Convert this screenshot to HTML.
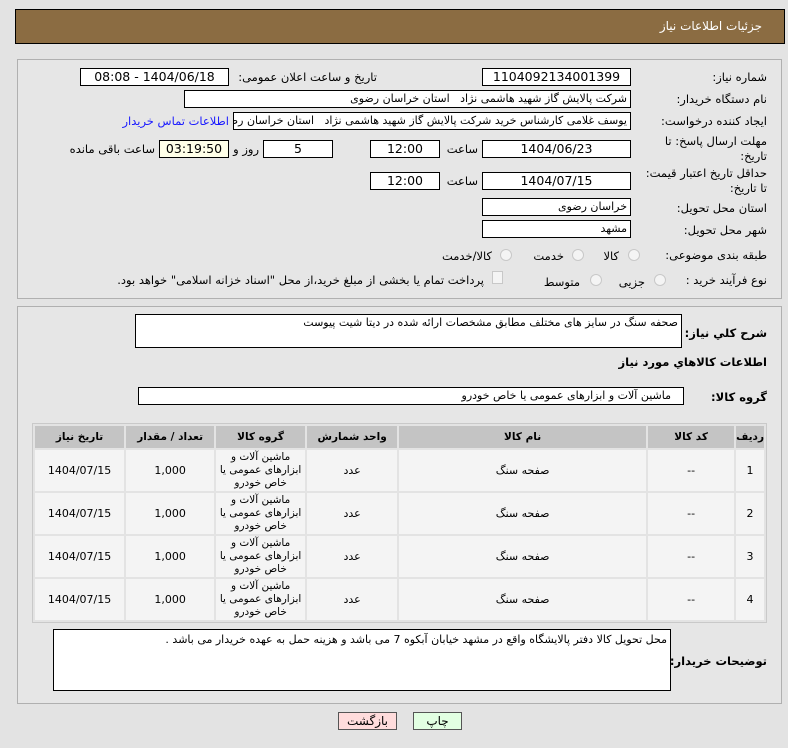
<!DOCTYPE html>
<html><head><meta charset="utf-8"><style>
*{box-sizing:border-box;margin:0;padding:0}
body{width:788px;height:748px;background:#e3e3e3;font-family:"DejaVu Sans","Liberation Sans",sans-serif;font-size:11px;color:#000;position:relative;overflow:hidden}
.a{position:absolute}
.hdr{left:15px;top:9px;width:770px;height:35px;background:#8b6c42;border:1px solid #000}
.hdr span{position:absolute;right:22px;top:9px;color:#fff;font-size:12px}
.pan{left:17px;width:765px;border:1px solid #b0b0b0;background:#e6e6e6}
.l{position:absolute;direction:rtl;white-space:nowrap;font-size:11.5px}
.in{position:absolute;background:#fff;border:1px solid #000;height:18px;direction:rtl;white-space:nowrap;overflow:hidden;padding:0 3px;font-size:11px;line-height:16px}
.c{text-align:center;font-size:12.5px}
.rad{position:absolute;width:12px;height:12px;border-radius:50%;border:1px solid #c8c8c8;background:#f4f4f4}
.b{font-weight:bold}
table{position:absolute;left:32px;top:423px;width:735px;border-collapse:separate;border-spacing:2px;background:#e3e3e3;border:1px solid #c9c9c9;direction:rtl}
th{background:#c4c4c4;height:22px;font-size:10.5px;font-weight:bold;padding:0}
td{background:#f4f4f4;height:41px;text-align:center;font-size:11px;line-height:13px;padding:0}
td.g{font-size:10.5px}
.btn{position:absolute;top:712px;height:18px;border:1px solid #555;font-size:12px;text-align:center;line-height:16px}
</style></head><body>
<div class="a hdr"><span>جزئیات اطلاعات نیاز</span></div>

<div class="a pan" style="top:59px;height:240px"></div>
<div class="l" style="right:21px;top:70px">شماره نیاز:</div>
<div class="in c" style="left:482px;top:68px;width:149px">1104092134001399</div>
<div class="l" style="right:411px;top:70px">تاریخ و ساعت اعلان عمومی:</div>
<div class="in c" style="left:80px;top:68px;width:149px">1404/06/18 - 08:08</div>

<div class="l" style="right:21px;top:92px">نام دستگاه خریدار:</div>
<div class="in" style="left:184px;top:90px;width:447px">شرکت پالایش گاز شهید هاشمی نژاد &nbsp; استان خراسان رضوی</div>

<div class="l" style="right:21px;top:114px">ایجاد کننده درخواست:</div>
<div class="in" style="left:233px;top:112px;width:398px">یوسف غلامی کارشناس خرید شرکت پالایش گاز شهید هاشمی نژاد &nbsp; استان خراسان رضوی</div>
<div class="l" style="right:559px;top:114px;color:#1a1aff">اطلاعات تماس خریدار</div>

<div class="l" style="right:21px;top:134px;line-height:15px">مهلت ارسال پاسخ: تا<br>تاریخ:</div>
<div class="in c" style="left:482px;top:140px;width:149px">1404/06/23</div>
<div class="l" style="right:310px;top:142px">ساعت</div>
<div class="in c" style="left:370px;top:140px;width:70px">12:00</div>
<div class="in c" style="left:263px;top:140px;width:70px">5</div>
<div class="l" style="right:529px;top:142px">روز و</div>
<div class="in c" style="left:159px;top:140px;width:70px;background:#ffffe8">03:19:50</div>
<div class="l" style="right:633px;top:142px">ساعت باقی مانده</div>

<div class="l" style="right:21px;top:166px;line-height:15px">حداقل تاریخ اعتبار قیمت:<br>تا تاریخ:</div>
<div class="in c" style="left:482px;top:172px;width:149px">1404/07/15</div>
<div class="l" style="right:310px;top:174px">ساعت</div>
<div class="in c" style="left:370px;top:172px;width:70px">12:00</div>

<div class="l" style="right:21px;top:201px">استان محل تحویل:</div>
<div class="in" style="left:482px;top:198px;width:149px">خراسان رضوی</div>
<div class="l" style="right:21px;top:223px">شهر محل تحویل:</div>
<div class="in" style="left:482px;top:220px;width:149px">مشهد</div>

<div class="l" style="right:21px;top:248px">طبقه بندی موضوعی:</div>
<div class="rad" style="left:628px;top:249px"></div><div class="l" style="right:169px;top:249px">کالا</div>
<div class="rad" style="left:572px;top:249px"></div><div class="l" style="right:224px;top:249px">خدمت</div>
<div class="rad" style="left:500px;top:249px"></div><div class="l" style="right:296px;top:249px">کالا/خدمت</div>

<div class="l" style="right:21px;top:273px">نوع فرآیند خرید :</div>
<div class="rad" style="left:654px;top:274px"></div><div class="l" style="right:143px;top:275px">جزیی</div>
<div class="rad" style="left:590px;top:274px"></div><div class="l" style="right:208px;top:275px">متوسط</div>
<div class="a" style="left:492px;top:271px;width:11px;height:13px;border:1px solid #c8c8c8;background:#f4f4f4"></div>
<div class="l" style="right:304px;top:273px">پرداخت تمام یا بخشی از مبلغ خرید،از محل "اسناد خزانه اسلامی" خواهد بود.</div>

<div class="a pan" style="top:306px;height:398px"></div>
<div class="l b" style="right:21px;top:326px">شرح کلي نیاز:</div>
<div class="in" style="left:135px;top:314px;width:547px;height:34px">صحفه سنگ در سایز های مختلف مطابق مشخصات ارائه شده در دیتا شیت پیوست</div>
<div class="l b" style="right:21px;top:355px">اطلاعات کالاهاي مورد نیاز</div>
<div class="l b" style="right:21px;top:390px">گروه کالا:</div>
<div class="in" style="left:138px;top:387px;width:546px;padding-right:12px">ماشین آلات و ابزارهای عمومی یا خاص خودرو</div>

<table>
<tr><th style="width:27px">ردیف</th><th style="width:86px">کد کالا</th><th style="width:247px">نام کالا</th><th style="width:90px">واحد شمارش</th><th style="width:89px">گروه کالا</th><th style="width:88px">تعداد / مقدار</th><th>تاریخ نیاز</th></tr>
<tr><td>1</td><td>--</td><td>صفحه سنگ</td><td>عدد</td><td class="g">ماشین آلات و<br>ابزارهای عمومی یا<br>خاص خودرو</td><td>1,000</td><td>1404/07/15</td></tr>
<tr><td>2</td><td>--</td><td>صفحه سنگ</td><td>عدد</td><td class="g">ماشین آلات و<br>ابزارهای عمومی یا<br>خاص خودرو</td><td>1,000</td><td>1404/07/15</td></tr>
<tr><td>3</td><td>--</td><td>صفحه سنگ</td><td>عدد</td><td class="g">ماشین آلات و<br>ابزارهای عمومی یا<br>خاص خودرو</td><td>1,000</td><td>1404/07/15</td></tr>
<tr><td>4</td><td>--</td><td>صفحه سنگ</td><td>عدد</td><td class="g">ماشین آلات و<br>ابزارهای عمومی یا<br>خاص خودرو</td><td>1,000</td><td>1404/07/15</td></tr>
</table>

<div class="l b" style="right:21px;top:654px">توضیحات خریدار:</div>
<div class="in" style="left:53px;top:629px;width:618px;height:62px;white-space:normal;padding-top:2px">محل تحویل کالا دفتر پالایشگاه واقع در مشهد خیابان آبکوه 7 می باشد و هزینه حمل به عهده خریدار می باشد .</div>

<div class="btn" style="left:338px;width:59px;background:#ffdcdc">بازگشت</div>
<div class="btn" style="left:413px;width:49px;background:#e2ffe2">چاپ</div>
</body></html>
